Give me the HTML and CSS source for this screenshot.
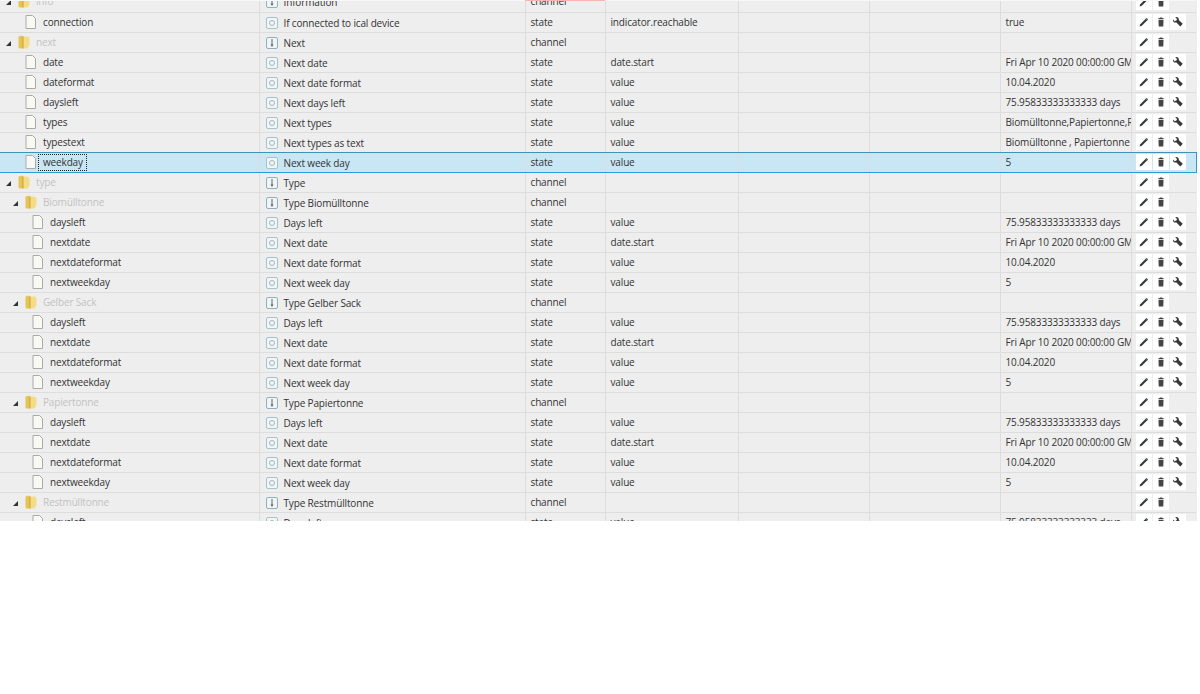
FILE: index.html
```html
<!DOCTYPE html>
<html lang="en">
<head>
    <meta charset="UTF-8">
    <title>Objects</title>
    <link rel="stylesheet" href="styles.css">
</head>
<body>
    <svg class="defs" width="0" height="0">
        <symbol id="folder" viewBox="0 0 12 14">
            <path d="M.5 1.500 4 .5l1 1v12H1.500l-1-1z" fill="#e6c355"/>
            <path d="M5 1.500h4.500l2 1.500v7l-2 3.500H5z" fill="#f3dc85"/>
            <path d="M5 1.500v12" stroke="#c9a33a" fill="none"/>
        </symbol>
        <symbol id="file" viewBox="0 0 12 14">
            <path d="M1 .5h6.500l3 3v10H1z" fill="#f9f9f3" stroke="#aaa"/>
        </symbol>
        <symbol id="role-state" viewBox="0 0 12 12">
            <rect x=".5" y=".5" width="11" height="11" rx="1.500" fill="#f2f5f6" stroke="#a6c2cb"/>
            <circle cx="6" cy="6" r="2.500" fill="none" stroke="#a3b6bd"/>
        </symbol>
        <symbol id="role-channel" viewBox="0 0 12 12">
            <rect x=".5" y=".5" width="11" height="11" rx="1.500" fill="#f2f5f6" stroke="#8fb2bd"/>
            <path d="M6 2v6" fill="none" stroke="#55666e"/>
            <path d="M4.500 7.500h3L6 10z" fill="#55666e"/>
        </symbol>
        <symbol id="pencil" viewBox="0 0 10 10">
            <path d="M.5 9.500l.8-2.300L7.500.9l1.600 1.600-6.300 6.300z" fill="#3a3a3a"/>
            <path d="M7.500.9l1.600 1.600-.9.9-1.600-1.600z" fill="#5f7f9c"/>
        </symbol>
        <symbol id="trash" viewBox="0 0 10 10">
            <path d="M4 .5h2l.3.500h1.200v1.300h-5V1h1.200zM2.500 3h5l-.2 6.500H2.700z" fill="#454545"/>
        </symbol>
        <symbol id="wrench" viewBox="0 0 10 10">
            <path d="M0 2.600 1.700 4.200l1.700-.6.600-1.700L2.300.2C4.400-.5 6.300 1 5.800 3l4 3.800-2.500 2.700-3.900-4C1.500 6-.4 4.600 0 2.600z" fill="#3a3a3a"/>
        </symbol>
    </svg>

    <div class="viewport">
        <div class="top-strip"><div class="top-mark"></div></div>
        <table class="grid">
            <colgroup>
                <col class="c-id"><col class="c-name"><col class="c-type"><col class="c-role">
                <col class="c-room"><col class="c-func"><col class="c-value"><col class="c-btn">
            </colgroup>
            <tbody>
                <tr><td class="lvl1"><i class="arrow"></i><svg class="ico-folder"><use href="#folder"/></svg><span class="folder-name">info</span></td><td><svg class="ico-role"><use href="#role-channel"/></svg>Information</td><td>channel</td><td></td><td></td><td></td><td></td><td><div class="btns"><b><svg><use href="#pencil"/></svg></b><b><svg><use href="#trash"/></svg></b></div></td></tr>
                <tr><td class="lvl1f"><svg class="ico-file"><use href="#file"/></svg>connection</td><td><svg class="ico-role"><use href="#role-state"/></svg>If connected to ical device</td><td>state</td><td>indicator.reachable</td><td></td><td></td><td>true</td><td><div class="btns"><b><svg><use href="#pencil"/></svg></b><b><svg><use href="#trash"/></svg></b><b><svg><use href="#wrench"/></svg></b></div></td></tr>
                <tr><td class="lvl1"><i class="arrow"></i><svg class="ico-folder"><use href="#folder"/></svg><span class="folder-name">next</span></td><td><svg class="ico-role"><use href="#role-channel"/></svg>Next</td><td>channel</td><td></td><td></td><td></td><td></td><td><div class="btns"><b><svg><use href="#pencil"/></svg></b><b><svg><use href="#trash"/></svg></b></div></td></tr>
                <tr><td class="lvl1f"><svg class="ico-file"><use href="#file"/></svg>date</td><td><svg class="ico-role"><use href="#role-state"/></svg>Next date</td><td>state</td><td>date.start</td><td></td><td></td><td>Fri Apr 10 2020 00:00:00 GMT+0200</td><td><div class="btns"><b><svg><use href="#pencil"/></svg></b><b><svg><use href="#trash"/></svg></b><b><svg><use href="#wrench"/></svg></b></div></td></tr>
                <tr><td class="lvl1f"><svg class="ico-file"><use href="#file"/></svg>dateformat</td><td><svg class="ico-role"><use href="#role-state"/></svg>Next date format</td><td>state</td><td>value</td><td></td><td></td><td>10.04.2020</td><td><div class="btns"><b><svg><use href="#pencil"/></svg></b><b><svg><use href="#trash"/></svg></b><b><svg><use href="#wrench"/></svg></b></div></td></tr>
                <tr><td class="lvl1f"><svg class="ico-file"><use href="#file"/></svg>daysleft</td><td><svg class="ico-role"><use href="#role-state"/></svg>Next days left</td><td>state</td><td>value</td><td></td><td></td><td>75.95833333333333 days</td><td><div class="btns"><b><svg><use href="#pencil"/></svg></b><b><svg><use href="#trash"/></svg></b><b><svg><use href="#wrench"/></svg></b></div></td></tr>
                <tr><td class="lvl1f"><svg class="ico-file"><use href="#file"/></svg>types</td><td><svg class="ico-role"><use href="#role-state"/></svg>Next types</td><td>state</td><td>value</td><td></td><td></td><td>Biomülltonne,Papiertonne,Restmülltonne</td><td><div class="btns"><b><svg><use href="#pencil"/></svg></b><b><svg><use href="#trash"/></svg></b><b><svg><use href="#wrench"/></svg></b></div></td></tr>
                <tr class="before-selected"><td class="lvl1f"><svg class="ico-file"><use href="#file"/></svg>typestext</td><td><svg class="ico-role"><use href="#role-state"/></svg>Next types as text</td><td>state</td><td>value</td><td></td><td></td><td>Biomülltonne , Papiertonne , Restmülltonne</td><td><div class="btns"><b><svg><use href="#pencil"/></svg></b><b><svg><use href="#trash"/></svg></b><b><svg><use href="#wrench"/></svg></b></div></td></tr>
                <tr class="selected"><td class="lvl1f"><svg class="ico-file"><use href="#file"/></svg><span class="focused">weekday</span></td><td><svg class="ico-role"><use href="#role-state"/></svg>Next week day</td><td>state</td><td>value</td><td></td><td></td><td>5</td><td><div class="btns"><b><svg><use href="#pencil"/></svg></b><b><svg><use href="#trash"/></svg></b><b><svg><use href="#wrench"/></svg></b></div></td></tr>
                <tr><td class="lvl1"><i class="arrow"></i><svg class="ico-folder"><use href="#folder"/></svg><span class="folder-name">type</span></td><td><svg class="ico-role"><use href="#role-channel"/></svg>Type</td><td>channel</td><td></td><td></td><td></td><td></td><td><div class="btns"><b><svg><use href="#pencil"/></svg></b><b><svg><use href="#trash"/></svg></b></div></td></tr>
                <tr><td class="lvl2"><i class="arrow"></i><svg class="ico-folder"><use href="#folder"/></svg><span class="folder-name">Biomülltonne</span></td><td><svg class="ico-role"><use href="#role-channel"/></svg>Type Biomülltonne</td><td>channel</td><td></td><td></td><td></td><td></td><td><div class="btns"><b><svg><use href="#pencil"/></svg></b><b><svg><use href="#trash"/></svg></b></div></td></tr>
                <tr><td class="lvl2f"><svg class="ico-file"><use href="#file"/></svg>daysleft</td><td><svg class="ico-role"><use href="#role-state"/></svg>Days left</td><td>state</td><td>value</td><td></td><td></td><td>75.95833333333333 days</td><td><div class="btns"><b><svg><use href="#pencil"/></svg></b><b><svg><use href="#trash"/></svg></b><b><svg><use href="#wrench"/></svg></b></div></td></tr>
                <tr><td class="lvl2f"><svg class="ico-file"><use href="#file"/></svg>nextdate</td><td><svg class="ico-role"><use href="#role-state"/></svg>Next date</td><td>state</td><td>date.start</td><td></td><td></td><td>Fri Apr 10 2020 00:00:00 GMT+0200</td><td><div class="btns"><b><svg><use href="#pencil"/></svg></b><b><svg><use href="#trash"/></svg></b><b><svg><use href="#wrench"/></svg></b></div></td></tr>
                <tr><td class="lvl2f"><svg class="ico-file"><use href="#file"/></svg>nextdateformat</td><td><svg class="ico-role"><use href="#role-state"/></svg>Next date format</td><td>state</td><td>value</td><td></td><td></td><td>10.04.2020</td><td><div class="btns"><b><svg><use href="#pencil"/></svg></b><b><svg><use href="#trash"/></svg></b><b><svg><use href="#wrench"/></svg></b></div></td></tr>
                <tr><td class="lvl2f"><svg class="ico-file"><use href="#file"/></svg>nextweekday</td><td><svg class="ico-role"><use href="#role-state"/></svg>Next week day</td><td>state</td><td>value</td><td></td><td></td><td>5</td><td><div class="btns"><b><svg><use href="#pencil"/></svg></b><b><svg><use href="#trash"/></svg></b><b><svg><use href="#wrench"/></svg></b></div></td></tr>
                <tr><td class="lvl2"><i class="arrow"></i><svg class="ico-folder"><use href="#folder"/></svg><span class="folder-name">Gelber Sack</span></td><td><svg class="ico-role"><use href="#role-channel"/></svg>Type Gelber Sack</td><td>channel</td><td></td><td></td><td></td><td></td><td><div class="btns"><b><svg><use href="#pencil"/></svg></b><b><svg><use href="#trash"/></svg></b></div></td></tr>
                <tr><td class="lvl2f"><svg class="ico-file"><use href="#file"/></svg>daysleft</td><td><svg class="ico-role"><use href="#role-state"/></svg>Days left</td><td>state</td><td>value</td><td></td><td></td><td>75.95833333333333 days</td><td><div class="btns"><b><svg><use href="#pencil"/></svg></b><b><svg><use href="#trash"/></svg></b><b><svg><use href="#wrench"/></svg></b></div></td></tr>
                <tr><td class="lvl2f"><svg class="ico-file"><use href="#file"/></svg>nextdate</td><td><svg class="ico-role"><use href="#role-state"/></svg>Next date</td><td>state</td><td>date.start</td><td></td><td></td><td>Fri Apr 10 2020 00:00:00 GMT+0200</td><td><div class="btns"><b><svg><use href="#pencil"/></svg></b><b><svg><use href="#trash"/></svg></b><b><svg><use href="#wrench"/></svg></b></div></td></tr>
                <tr><td class="lvl2f"><svg class="ico-file"><use href="#file"/></svg>nextdateformat</td><td><svg class="ico-role"><use href="#role-state"/></svg>Next date format</td><td>state</td><td>value</td><td></td><td></td><td>10.04.2020</td><td><div class="btns"><b><svg><use href="#pencil"/></svg></b><b><svg><use href="#trash"/></svg></b><b><svg><use href="#wrench"/></svg></b></div></td></tr>
                <tr><td class="lvl2f"><svg class="ico-file"><use href="#file"/></svg>nextweekday</td><td><svg class="ico-role"><use href="#role-state"/></svg>Next week day</td><td>state</td><td>value</td><td></td><td></td><td>5</td><td><div class="btns"><b><svg><use href="#pencil"/></svg></b><b><svg><use href="#trash"/></svg></b><b><svg><use href="#wrench"/></svg></b></div></td></tr>
                <tr><td class="lvl2"><i class="arrow"></i><svg class="ico-folder"><use href="#folder"/></svg><span class="folder-name">Papiertonne</span></td><td><svg class="ico-role"><use href="#role-channel"/></svg>Type Papiertonne</td><td>channel</td><td></td><td></td><td></td><td></td><td><div class="btns"><b><svg><use href="#pencil"/></svg></b><b><svg><use href="#trash"/></svg></b></div></td></tr>
                <tr><td class="lvl2f"><svg class="ico-file"><use href="#file"/></svg>daysleft</td><td><svg class="ico-role"><use href="#role-state"/></svg>Days left</td><td>state</td><td>value</td><td></td><td></td><td>75.95833333333333 days</td><td><div class="btns"><b><svg><use href="#pencil"/></svg></b><b><svg><use href="#trash"/></svg></b><b><svg><use href="#wrench"/></svg></b></div></td></tr>
                <tr><td class="lvl2f"><svg class="ico-file"><use href="#file"/></svg>nextdate</td><td><svg class="ico-role"><use href="#role-state"/></svg>Next date</td><td>state</td><td>date.start</td><td></td><td></td><td>Fri Apr 10 2020 00:00:00 GMT+0200</td><td><div class="btns"><b><svg><use href="#pencil"/></svg></b><b><svg><use href="#trash"/></svg></b><b><svg><use href="#wrench"/></svg></b></div></td></tr>
                <tr><td class="lvl2f"><svg class="ico-file"><use href="#file"/></svg>nextdateformat</td><td><svg class="ico-role"><use href="#role-state"/></svg>Next date format</td><td>state</td><td>value</td><td></td><td></td><td>10.04.2020</td><td><div class="btns"><b><svg><use href="#pencil"/></svg></b><b><svg><use href="#trash"/></svg></b><b><svg><use href="#wrench"/></svg></b></div></td></tr>
                <tr><td class="lvl2f"><svg class="ico-file"><use href="#file"/></svg>nextweekday</td><td><svg class="ico-role"><use href="#role-state"/></svg>Next week day</td><td>state</td><td>value</td><td></td><td></td><td>5</td><td><div class="btns"><b><svg><use href="#pencil"/></svg></b><b><svg><use href="#trash"/></svg></b><b><svg><use href="#wrench"/></svg></b></div></td></tr>
                <tr><td class="lvl2"><i class="arrow"></i><svg class="ico-folder"><use href="#folder"/></svg><span class="folder-name">Restmülltonne</span></td><td><svg class="ico-role"><use href="#role-channel"/></svg>Type Restmülltonne</td><td>channel</td><td></td><td></td><td></td><td></td><td><div class="btns"><b><svg><use href="#pencil"/></svg></b><b><svg><use href="#trash"/></svg></b></div></td></tr>
                <tr><td class="lvl2f"><svg class="ico-file"><use href="#file"/></svg>daysleft</td><td><svg class="ico-role"><use href="#role-state"/></svg>Days left</td><td>state</td><td>value</td><td></td><td></td><td>75.95833333333333 days</td><td><div class="btns"><b><svg><use href="#pencil"/></svg></b><b><svg><use href="#trash"/></svg></b><b><svg><use href="#wrench"/></svg></b></div></td></tr>
            </tbody>
        </table>
    </div>
</body>
</html>
```

FILE: styles.css
```css
* {
    margin: 0;
    padding: 0;
    box-sizing: border-box;
}

body {
    font-family: "Open Sans", "Noto Sans", sans-serif;
    font-size: 10px;
    letter-spacing: -0.15px;
    color: #333;
    background: white;
}

.defs {
    display: block;
    height: 0;
}

.viewport {
    position: relative;
    height: 521px;
    overflow: hidden;
}

/* leftover of the header row that scrolled away */
.top-strip {
    position: absolute;
    top: 0;
    left: 0;
    width: 1196px;
    height: 1px;
    background: #f7f7f7;
    z-index: 1;
}

.top-mark {
    width: 80px;
    height: 1px;
    margin-left: 525px;
    background: #f8b5ae;
}

.grid {
    width: 1196px;
    margin-top: -8px;
    table-layout: fixed;
    border-collapse: collapse;
    background: #eee;
}

.c-id { width: 259px; }
.c-name { width: 266px; }
.c-type { width: 80px; }
.c-role { width: 133px; }
.c-room { width: 131px; }
.c-func { width: 131px; }
.c-value { width: 131px; }
.c-btn { width: 65px; }

.grid td {
    height: 20px;
    padding: 0 5px;
    border-bottom: 1px solid #ddd;
    border-right: 1px solid #ddd;
    white-space: nowrap;
    overflow: hidden;
    line-height: 19px;
}

/* the name column sits one pixel lower than the rest */
.grid td:nth-child(2) {
    padding: 2px 5px 0 6px;
    line-height: 17px;
}

.grid td:last-child {
    border-right: none;
    padding: 0 0 0 4px;
}

.grid td.lvl1 { padding-left: 6px; }
.grid td.lvl2 { padding-left: 13px; }
.grid td.lvl1f { padding-left: 25px; }
.grid td.lvl2f { padding-left: 32px; }

.arrow {
    display: inline-block;
    width: 0;
    height: 0;
    margin-right: 7px;
    border-style: solid;
    border-width: 0 0 5px 5px;
    border-color: transparent transparent #333 transparent;
}

.ico-folder {
    width: 12px;
    height: 14px;
    margin-right: 6px;
    vertical-align: -3px;
}

.ico-file {
    width: 12px;
    height: 14px;
    margin-right: 6px;
    vertical-align: -3px;
}

.ico-role {
    width: 12px;
    height: 12px;
    margin-right: 6px;
    vertical-align: -2px;
}

.folder-name {
    color: #c2c2c2;
}

.focused {
    display: inline-block;
    line-height: 17px;
    margin: 0 -5px;
    padding: 0 4px 0 5px;
    outline: 1px dotted #222;
    outline-offset: -1px;
}

.selected td {
    background: #c9e6f5;
    border-bottom: 1px solid #2e9ad6;
}

.selected td:last-child {
    border-right: 1px solid #2e9ad6;
}

/* collapsed borders: the row above owns the selection's top line */
.before-selected td {
    border-bottom: 1px solid #3f93b8;
}

.btns {
    display: flex;
    gap: 1px;
}

.btns b {
    display: flex;
    align-items: center;
    justify-content: center;
    width: 16px;
    height: 16px;
    background: white;
}

.btns svg {
    width: 10px;
    height: 10px;
}
```
